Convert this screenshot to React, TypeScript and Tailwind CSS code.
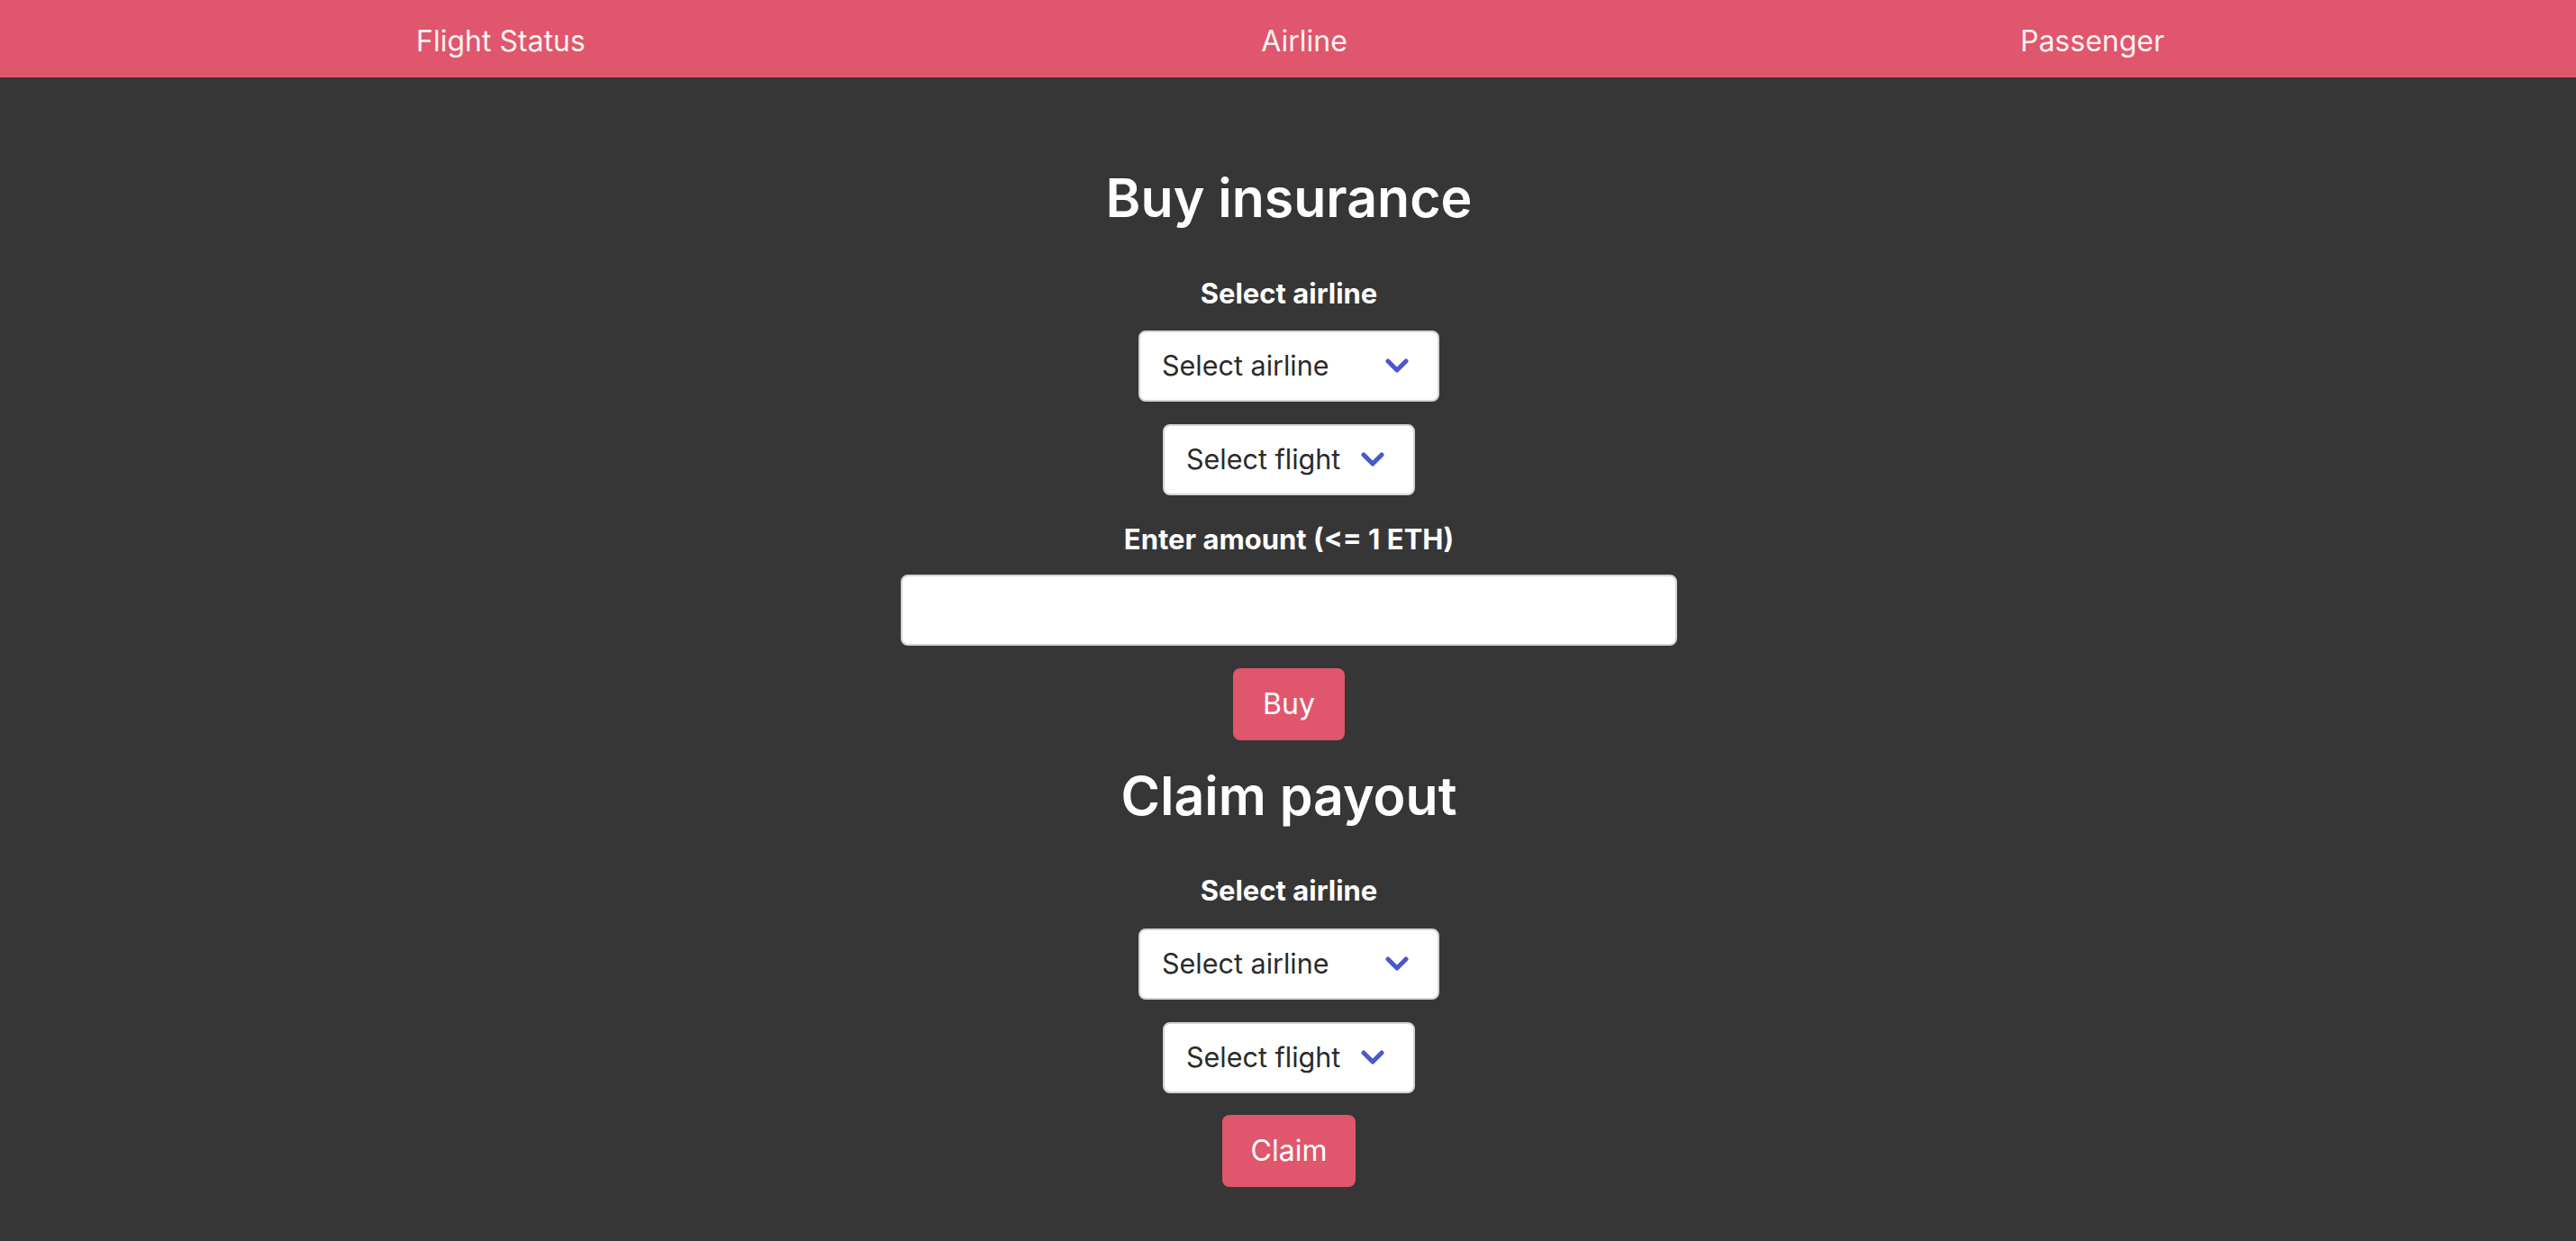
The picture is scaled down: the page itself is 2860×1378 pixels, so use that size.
import React from "react";

function Chevron() {
  return (
    <svg width="26" height="17" viewBox="0 0 26 17" className="shrink-0">
      <path d="M3 3 L13 13 L23 3" fill="none" stroke="#4a59c9" strokeWidth="5" strokeLinecap="round" strokeLinejoin="round" />
    </svg>
  );
}

function SelectBox({ label, width }: { label: string; width: string }) {
  return (
    <div
      className={`${width} h-[79px] bg-white border-2 border-[#d4d4d4] rounded-[8px] flex items-center justify-between pl-[24px] pr-[32px] text-[30.5px] text-[#2b2b2b]`}
    >
      <span className="leading-none">{label}</span>
      <Chevron />
    </div>
  );
}

export default function App() {
  return (
    <div
      className="min-h-[1378px] w-full bg-[#363636] text-white"
      style={{ fontFamily: "Inter, 'Noto Sans', sans-serif" }}
    >
      <nav className="h-[86px] bg-[#e0566c] flex items-center pt-[6px] text-[32px] text-[#fbf1f3]">
        <div className="ml-[356px] w-[400px] text-center">Flight Status</div>
        <div className="ml-[492px] w-[400px] text-center">Airline</div>
        <div className="ml-[475px] w-[400px] text-center">Passenger</div>
      </nav>

      <main className="flex flex-col items-center pt-[96px] pl-[2px]">
        <h1 className="text-[59px] leading-[76px] font-semibold">Buy insurance</h1>
        <label className="mt-[49px] text-[31px] leading-[38px] font-bold">Select airline</label>
        <div className="mt-[22px]">
          <SelectBox label="Select airline" width="w-[334px]" />
        </div>
        <div className="mt-[25px]">
          <SelectBox label="Select flight" width="w-[280px]" />
        </div>
        <label className="mt-[30px] text-[31px] leading-[38px] font-bold">Enter amount (&lt;= 1 ETH)</label>
        <input
          className="mt-[20px] w-[862px] h-[79px] bg-white border-2 border-[#d4d4d4] rounded-[8px] px-4 text-[32px] text-[#2b2b2b] outline-none"
          type="text"
        />
        <button className="mt-[25px] w-[124px] h-[80px] bg-[#e0566c] rounded-[8px] text-[32px] text-white">
          Buy
        </button>

        <h1 className="mt-[24px] text-[59px] leading-[76px] font-semibold">Claim payout</h1>
        <label className="mt-[48px] text-[31px] leading-[38px] font-bold">Select airline</label>
        <div className="mt-[23px]">
          <SelectBox label="Select airline" width="w-[334px]" />
        </div>
        <div className="mt-[25px]">
          <SelectBox label="Select flight" width="w-[280px]" />
        </div>
        <button className="mt-[24px] w-[148px] h-[80px] bg-[#e0566c] rounded-[8px] text-[32px] text-white">
          Claim
        </button>
      </main>
    </div>
  );
}
